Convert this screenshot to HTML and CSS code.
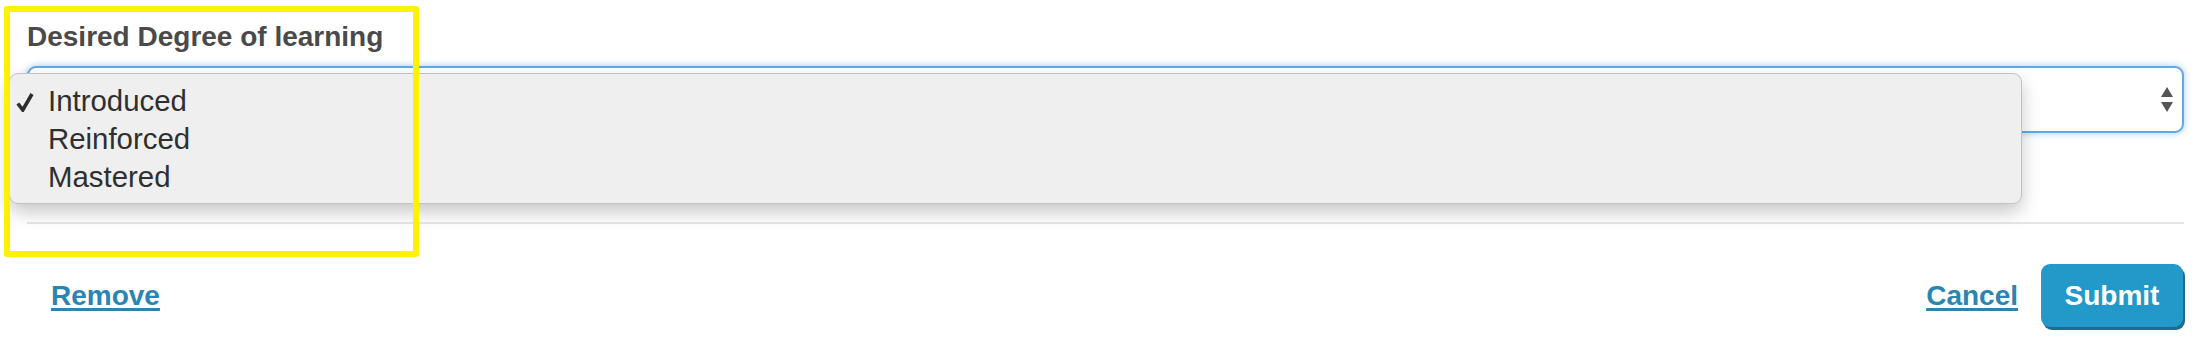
FILE: index.html
```html
<!DOCTYPE html>
<html lang="en">
<head>
<meta charset="utf-8">
<title>Desired Degree of learning</title>
<link rel="stylesheet" href="styles.css">
</head>
<body>
<div class="page">
  <div class="form">
    <div class="field-label">Desired Degree of learning</div>
    <div class="select">
      <svg class="select-arrows" width="12" height="26" viewBox="0 0 12 26">
        <polygon points="6,0 12,10 0,10" fill="#555"/>
        <polygon points="0,15 12,15 6,25" fill="#555"/>
      </svg>
    </div>
    <div class="divider"></div>
  </div>
  <div class="footer">
    <a class="link" href="#">Remove</a>
    <div class="actions">
      <a class="link" href="#">Cancel</a>
      <button class="submit" type="button">Submit</button>
    </div>
  </div>

  <div class="menu">
    <div class="menu-item selected">
      <svg class="check" width="18" height="20" viewBox="0 0 18 20">
        <path d="M1.8 11.5 L6.8 18 L16 2" fill="none" stroke="#2e2e2e" stroke-width="3.6" stroke-linejoin="miter"/>
      </svg>
      <span>Introduced</span>
    </div>
    <div class="menu-item"><span>Reinforced</span></div>
    <div class="menu-item"><span>Mastered</span></div>
  </div>

  <div class="highlight"></div>
</div>
</body>
</html>
```

FILE: styles.css
```css
html, body {
  margin: 0;
  padding: 0;
  background: #ffffff;
}

body {
  font-family: "Liberation Sans", Arial, Helvetica, sans-serif;
  width: 2208px;
  height: 352px;
  overflow: hidden;
}

.page {
  position: relative;
  width: 2208px;
  height: 352px;
}

.form {
  padding: 21px 24px 0 27px;
}

.field-label {
  font-size: 28px;
  line-height: 32px;
  font-weight: bold;
  color: #4a4a4a;
}

.select {
  margin-top: 13px;
  height: 67px;
  box-sizing: border-box;
  border: 2px solid #5fa9e6;
  border-radius: 9px;
  box-shadow: 0 0 6px 1px rgba(95, 169, 230, 0.45);
  background: #fff;
  display: flex;
  align-items: center;
  justify-content: flex-end;
  padding-right: 9px;
}

.select-arrows {
  display: block;
}

.divider {
  margin-top: 89px;
  height: 2px;
  background: #e6e6e6;
}

.footer {
  display: flex;
  justify-content: space-between;
  align-items: center;
  padding: 40px 23px 0 51px;
}

.actions {
  display: flex;
  align-items: center;
  gap: 23px;
}

.link {
  font-size: 28px;
  line-height: 32px;
  font-weight: bold;
  color: #2a86b1;
  text-decoration: underline;
  text-decoration-thickness: 3px;
  text-underline-offset: 3px;
}

.submit {
  width: 142px;
  height: 63px;
  border: none;
  border-radius: 9px;
  background: #2399c9;
  box-shadow: 2px 3px 0 #1b6d8e;
  color: #ffffff;
  font-family: "Liberation Sans", Arial, Helvetica, sans-serif;
  font-size: 28px;
  line-height: 32px;
  font-weight: bold;
  padding: 0;
  margin-right: 2px;
}

.menu {
  position: absolute;
  left: 9px;
  top: 73px;
  width: 2013px;
  height: 131px;
  box-sizing: border-box;
  background: #efefef;
  border: 1px solid #c2c2c2;
  border-radius: 9px;
  box-shadow: 0 8px 18px rgba(0, 0, 0, 0.22);
  padding: 8px 0 0 0;
}

.menu-item {
  position: relative;
  font-size: 29.4px;
  line-height: 38px;
  color: #2f2f2f;
  padding-left: 38px;
}

.check {
  position: absolute;
  left: 6px;
  top: 10px;
}

.highlight {
  position: absolute;
  left: 4px;
  top: 6px;
  width: 415px;
  height: 251px;
  box-sizing: border-box;
  border: 6px solid #fff200;
  border-radius: 3px;
}
```
